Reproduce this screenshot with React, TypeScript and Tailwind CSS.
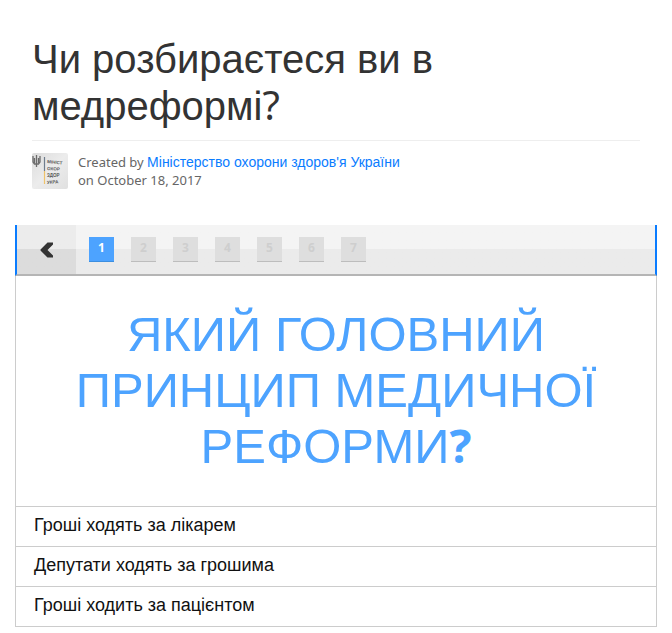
import { useState } from "react";

const PAGES = [1, 2, 3, 4, 5, 6, 7];

const ANSWERS = [
  "Гроші ходять за лікарем",
  "Депутати ходять за грошима",
  "Гроші ходить за пацієнтом",
];

function AuthorAvatar() {
  return (
    <svg
      viewBox="0 0 36 36"
      className="size-9 shrink-0 rounded-xs"
      role="img"
      aria-label="Міністерство охорони здоров'я України"
    >
      <defs>
        <linearGradient id="wall" x1="0" y1="0" x2="1" y2="1">
          <stop offset="0" stopColor="#dcdcdc" />
          <stop offset="0.5" stopColor="#ececec" />
          <stop offset="1" stopColor="#e0e0e0" />
        </linearGradient>
      </defs>
      <rect width="36" height="36" fill="url(#wall)" />
      <path
        d="M1 3v6l1.500 2h4L8 9V3M4.500 2v12M2.500 5v5M6.500 5v5"
        fill="none"
        stroke="#6b6b6b"
        strokeWidth="1.300"
      />
      <path d="M12.500 4v14" stroke="#6f7c8c" strokeWidth="1.200" />
      <path d="M12.500 18v13" stroke="#efc36a" strokeWidth="1.200" />
      <g
        fill="#555"
        fontFamily="Liberation Sans, sans-serif"
        fontSize="4.500"
        fontWeight="700"
      >
        <text x="15" y="10" transform="rotate(6 15 10)">МІНІСТ</text>
        <text x="15" y="17" transform="rotate(3 15 17)">ОХОР</text>
        <text x="15" y="24">ЗДОР</text>
        <text x="15" y="31" transform="rotate(-4 15 31)">УКРА</text>
      </g>
    </svg>
  );
}

export default function App() {
  const [page, setPage] = useState(1);

  return (
    <main className="bg-white pt-9 font-['Liberation_Sans',Arial,sans-serif]">
      <header className="mx-8">
        <h1 className="border-b border-[#eee] pb-[11px] text-[40px] leading-[46px] text-[#333]">
          Чи розбираєтеся ви в медреформі
          <span className="font-['Noto_Sans',sans-serif]">?</span>
        </h1>
        <div className="mt-3 flex gap-2.5">
          <AuthorAvatar />
          <p className="font-['Noto_Sans',sans-serif] text-[13px] leading-[18px] text-[#666]">
            Created by{" "}
            <a
              href="#author"
              className="font-['Liberation_Sans',Arial,sans-serif] text-[14px] text-[#0a7cff]"
            >
              Міністерство охорони здоров'я України
            </a>
            <br />
            on October 18, 2017
          </p>
        </div>
      </header>

      <section className="mx-[15px] mt-9">
        <nav className="flex h-[51px] border-x-2 border-b-2 border-x-[#0a7cff] border-b-[#b5b5b5] bg-linear-to-b from-[#f4f4f4] from-50% to-[#ebebeb] to-50%">
          <button
            type="button"
            aria-label="Назад"
            onClick={() => setPage(Math.max(1, page - 1))}
            className="flex w-[59px] items-center justify-center bg-linear-to-b from-[#ececec] from-50% to-[#dcdcdc] to-50%"
          >
            <svg viewBox="0 0 14 16" className="h-4 w-3.5" aria-hidden="true">
              <path
                d="M7.500 0.500h5.500v2L7.500 8l5.500 5.500v2H7.500L0.500 8.500v-1z"
                fill="#333"
              />
            </svg>
          </button>
          <div className="ml-[13px] flex items-center gap-[17px]">
            {PAGES.map((n) => (
              <button
                key={n}
                type="button"
                onClick={() => setPage(n)}
                className={`size-[25px] border-b pb-0.5 font-['Noto_Sans',sans-serif] text-[12px] leading-none font-bold ${
                  n === page
                    ? "border-[#3d8fe0] bg-[#4da3ff] text-white"
                    : "border-[#bdbdbd] bg-[#dedede] text-[#cecece]"
                }`}
              >
                {n}
              </button>
            ))}
          </div>
        </nav>

        <div className="border-x border-b border-[#ccc]">
          <h2 className="px-12 pt-[30px] pb-8 text-center text-[49px] leading-[56px] text-[#4da3ff] uppercase">
            Який головний принцип медичної реформи
            <span className="font-['Noto_Sans',sans-serif] text-[46px] leading-none font-bold">
              ?
            </span>
          </h2>
          {ANSWERS.map((answer) => (
            <button
              key={answer}
              type="button"
              className="block h-10 w-full border-t border-[#ccc] px-[18px] pb-1 text-left text-[18px] leading-6 text-[#111]"
            >
              {answer}
            </button>
          ))}
        </div>
      </section>
    </main>
  );
}
